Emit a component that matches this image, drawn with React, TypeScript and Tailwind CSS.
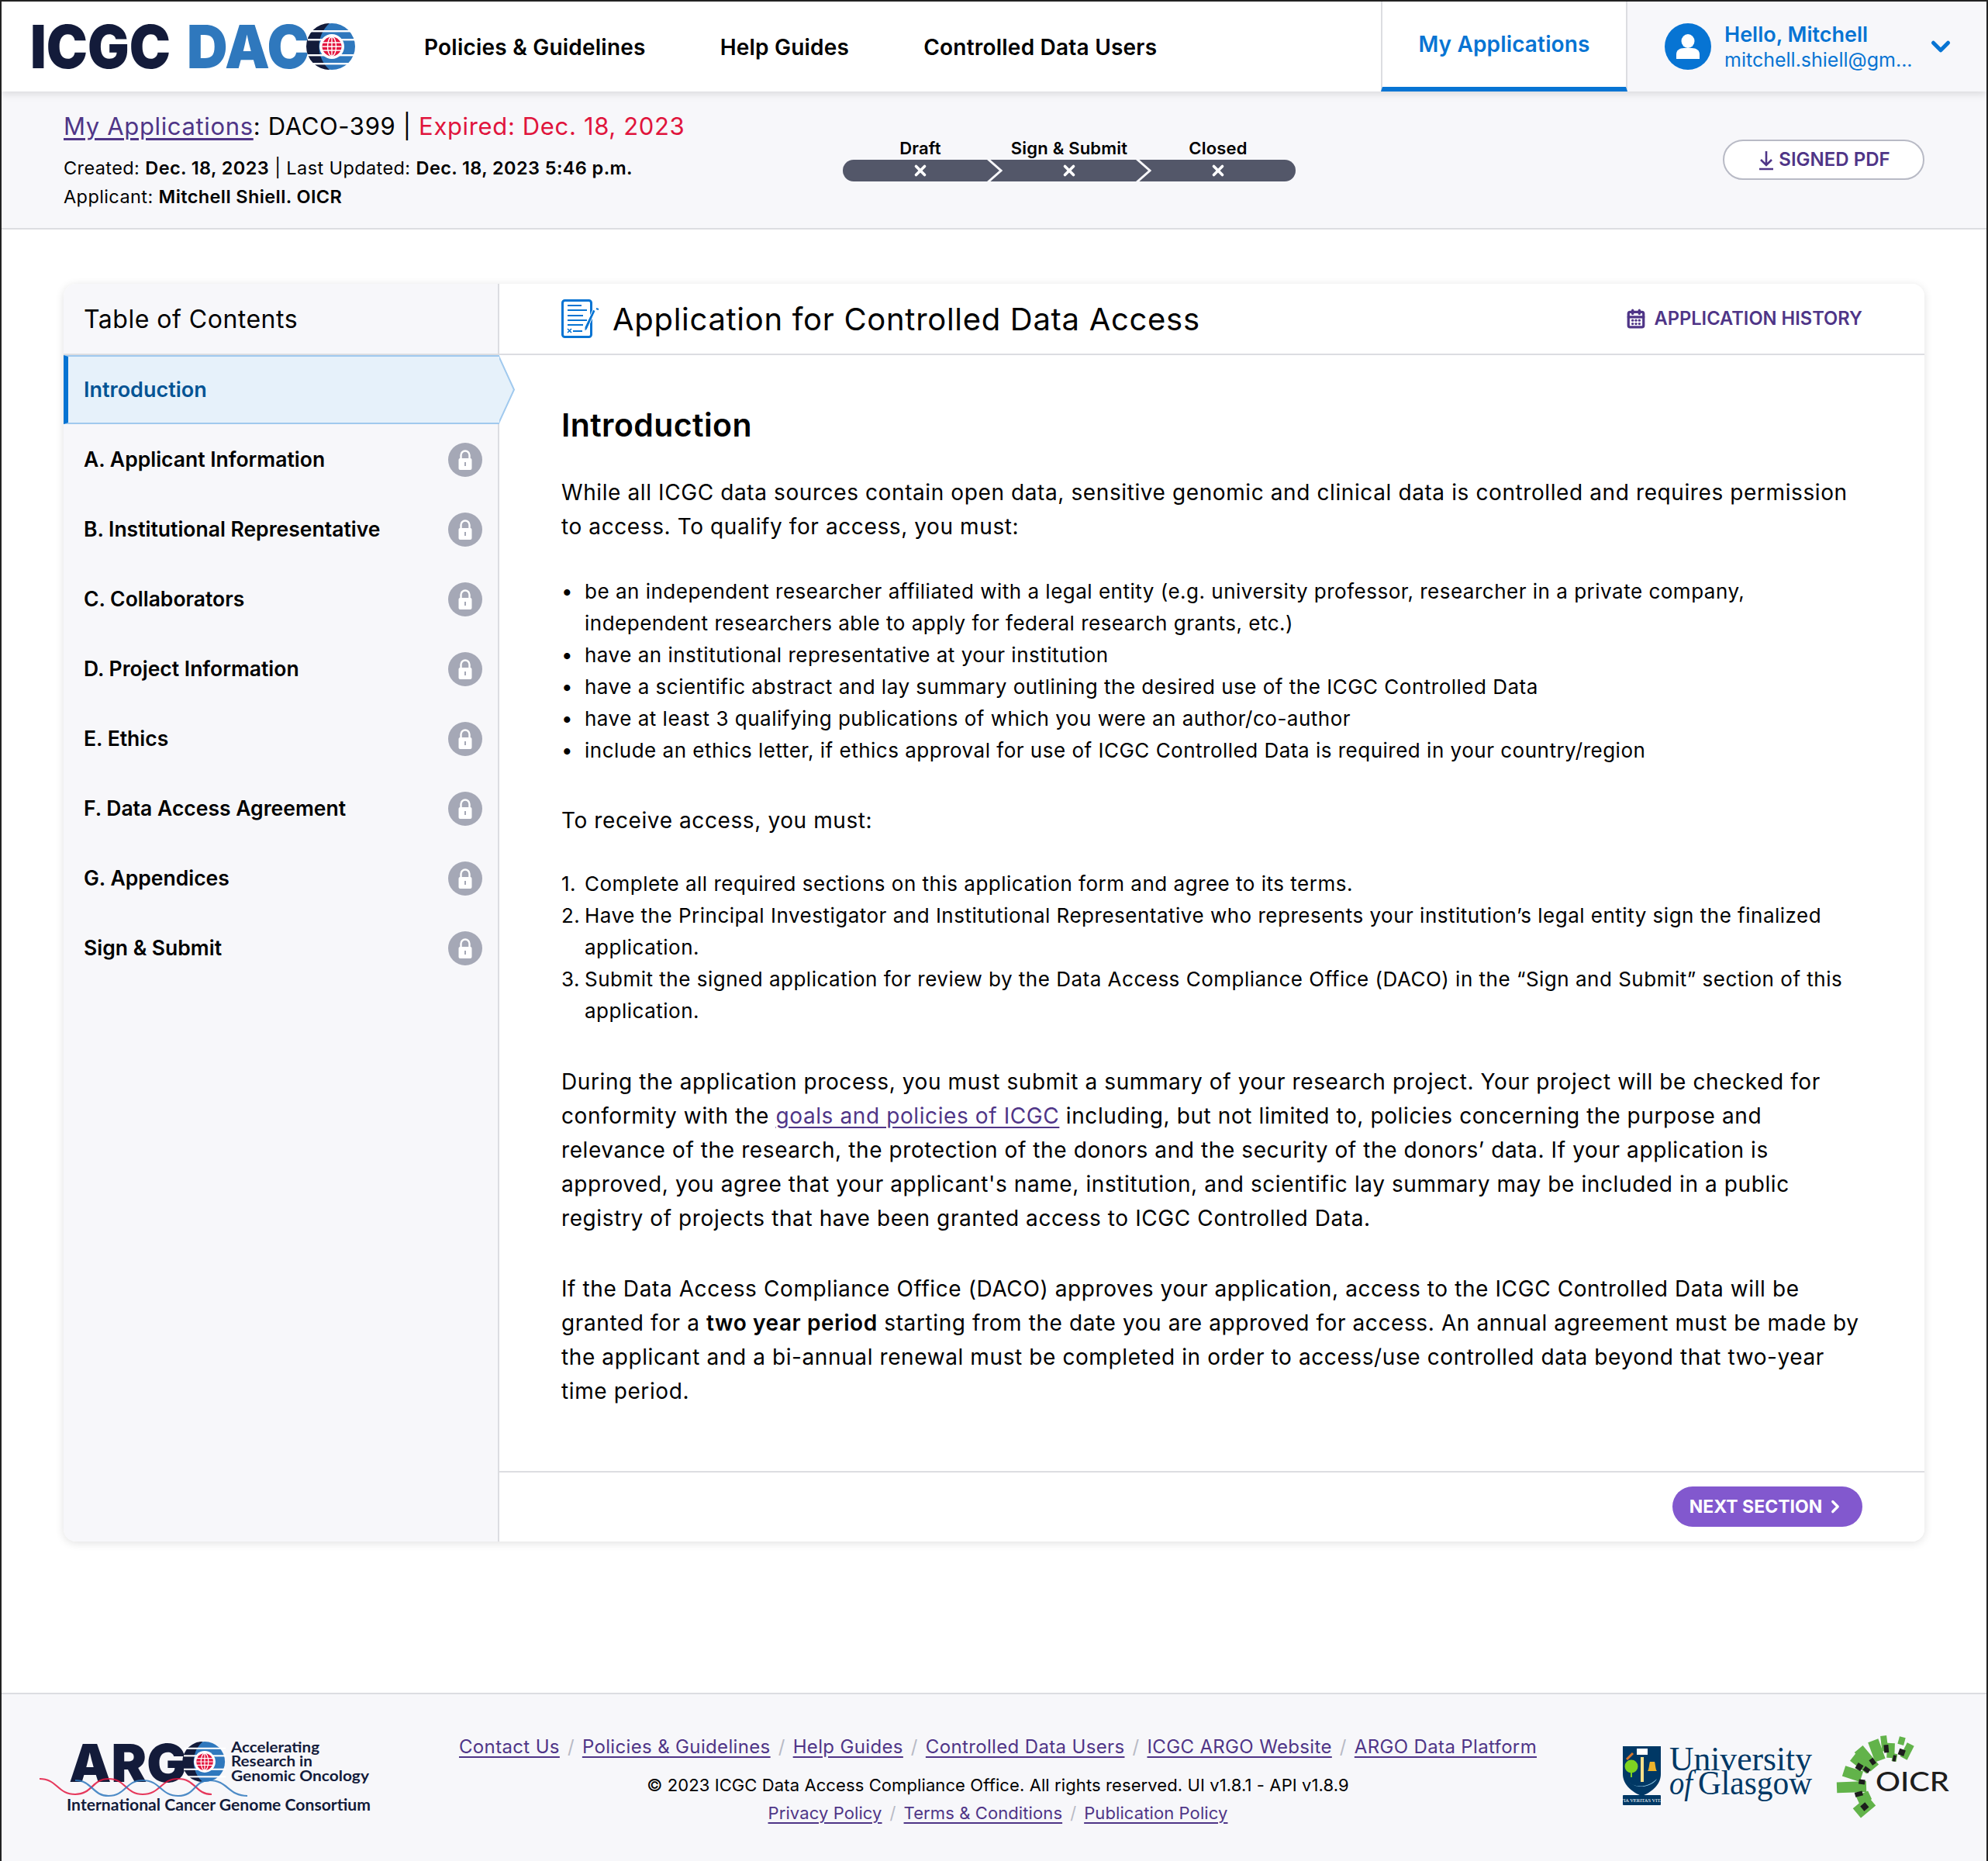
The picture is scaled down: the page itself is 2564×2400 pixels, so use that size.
import React from "react";
import { CalendarDays, ChevronDown, ChevronRight, X } from "lucide-react";

const navLinks = ["Policies & Guidelines", "Help Guides", "Controlled Data Users"];

const sections = [
  "A. Applicant Information",
  "B. Institutional Representative",
  "C. Collaborators",
  "D. Project Information",
  "E. Ethics",
  "F. Data Access Agreement",
  "G. Appendices",
  "Sign & Submit",
];

const steps = ["Draft", "Sign & Submit", "Closed"];

const footerLinks = [
  "Contact Us",
  "Policies & Guidelines",
  "Help Guides",
  "Controlled Data Users",
  "ICGC ARGO Website",
  "ARGO Data Platform",
];

const legalLinks = ["Privacy Policy", "Terms & Conditions", "Publication Policy"];

// [angle, inner radius, outer radius, half width]
const oicrGreen = [
  [-7, 45, 65, 4],
  [-20, 35, 62, 7],
  [2, 36, 55, 5],
  [15, 55, 65, 4],
  [27, 40, 60, 5],
  [10, 32, 42, 3],
  [-40, 30, 62, 7],
  [-52, 33, 60, 6],
  [-72, 38, 62, 7],
  [-92, 30, 68, 7],
  [-115, 28, 45, 6],
  [-130, 30, 55, 8],
];

const oicrBlack = [
  [-5, 43, 53, 3],
  [20, 42, 50, 4],
  [10, 32, 40, 2],
  [-58, 42, 50, 4],
  [-55, 32, 40, 3],
  [-35, 34, 42, 3],
  [-82, 32, 40, 3],
  [-105, 36, 46, 3],
  [-130, 38, 46, 4],
];

// shared ICGC globe mark, drawn around 0,0 with radius 30
function Globe({ dark = "#131b3a", stripe = "#2f78bd" }: { dark?: string; stripe?: string }) {
  return (
    <g>
      <circle r="30" fill={stripe} />
      <path d="M-3 -30 A30 30 0 0 0 -3 30 A40 40 0 0 1 -3 -30Z" fill={dark} />
      {[-21, -10, 10, 21].map((y) => (
        <rect key={y} x="-31" y={y} width="62" height="2.4" fill="#fff" />
      ))}
      <circle r="16" fill="#fff" />
      <circle r="12.5" fill="#e3163f" />
      <g stroke="#fff" strokeWidth="1.4" fill="none">
        <ellipse rx="5.5" ry="12.5" />
        <path d="M0 -12.5V12.5M-12 -5H12M-12.5 0H12.5M-12 5H12" />
      </g>
    </g>
  );
}

function IcgcLogo() {
  return (
    <svg width="418" height="62" viewBox="0 0 418 62" className="shrink-0 overflow-visible">
      <text
        x="-2"
        y="59"
        textLength="181"
        lengthAdjust="spacingAndGlyphs"
        fontFamily="Inter"
        fontWeight="900"
        fontSize="77"
        fill="#131b3a"
      >
        ICGC
      </text>
      <text
        x="200"
        y="59"
        textLength="158"
        lengthAdjust="spacingAndGlyphs"
        fontFamily="Inter"
        fontWeight="900"
        fontSize="77"
        fill="#2f78bd"
      >
        DAC
      </text>
      <g transform="translate(387 31)">
        <Globe />
      </g>
    </svg>
  );
}

function ArgoLogo() {
  return (
    <svg width="436" height="104" viewBox="0 0 436 104" className="shrink-0 overflow-visible">
      <text
        x="41"
        y="57"
        textLength="152"
        lengthAdjust="spacingAndGlyphs"
        fontFamily="Inter"
        fontWeight="900"
        fontSize="68"
        fill="#131b3a"
      >
        ARG
      </text>
      <g transform="translate(216 31) scale(0.87)">
        <Globe />
      </g>
      <g fontFamily="Lato" fontWeight="700" fontSize="19.5" fill="#131b3a">
        <text x="250" y="19" textLength="114" lengthAdjust="spacingAndGlyphs">Accelerating</text>
        <text x="250" y="37" textLength="105" lengthAdjust="spacingAndGlyphs">Research in</text>
        <text x="250" y="56" textLength="178" lengthAdjust="spacingAndGlyphs">Genomic Oncology</text>
        <text x="38" y="94" fontSize="21" textLength="392" lengthAdjust="spacingAndGlyphs">
          International Cancer Genome Consortium
        </text>
      </g>
      <path
        d="M3 53C26 53 26 73 49 73C71 73 71 53 92 53C114 53 114 73 136 73C159 73 159 53 182 53C204 53 204 73 225 73"
        fill="none"
        stroke="#e3163f"
        strokeWidth="2.2"
        opacity="0.85"
      />
      <path
        d="M49 55C71 55 71 75 92 75C114 75 114 55 136 55C159 55 159 75 182 75C204 75 202 55 222 55C246 55 246 75 271 75"
        fill="none"
        stroke="#2f78bd"
        strokeWidth="2.2"
        opacity="0.85"
      />
    </svg>
  );
}

function GlasgowLogo() {
  return (
    <svg width="244" height="76" viewBox="0 0 244 76" className="shrink-0 overflow-visible">
      <path d="M0 0H49V36C49 50 36 60 24.5 64C13 60 0 50 0 36Z" fill="#003865" />
      <rect x="0" y="63" width="49" height="13" rx="1" fill="#003865" />
      <text x="24.5" y="72" textAnchor="middle" fontFamily="Liberation Serif" fontSize="6.5" fill="#fff">
        VIA VERITAS VITA
      </text>
      <rect x="18" y="3" width="14" height="8" fill="#fff" />
      <circle cx="11" cy="26" r="8.5" fill="#7ed321" />
      <rect x="10" y="32" width="2" height="8" fill="#7ed321" />
      <rect x="23" y="14" width="4" height="32" fill="#f8e08a" />
      <path d="M32 32C34 30 34 22 35 20H41C42 22 42 30 44 32Z" fill="#eeb32b" />
      <path d="M8 46C16 54 32 54 44 42C40 50 20 58 8 46Z" fill="#9fd8f5" />
      <path d="M5 17L13 9" stroke="#d9772b" strokeWidth="3" />
      <text x="60" y="31" fontFamily="Liberation Serif" fontSize="44" fill="#003865" textLength="184" lengthAdjust="spacingAndGlyphs">
        University
      </text>
      <text x="60" y="62" fontFamily="Liberation Serif" fontStyle="italic" fontSize="44" fill="#003865" textLength="30" lengthAdjust="spacingAndGlyphs">
        of
      </text>
      <text x="97" y="62" fontFamily="Liberation Serif" fontSize="44" fill="#003865" textLength="147" lengthAdjust="spacingAndGlyphs">
        Glasgow
      </text>
    </svg>
  );
}

function OicrLogo() {
  return (
    <svg width="150" height="106" viewBox="0 0 150 106" className="shrink-0 overflow-visible">
      <g transform="translate(71 67)">
        {oicrGreen.map(([a, r0, r1, w]) => (
          <rect key={a} x={-w} y={-r1} width={w * 2} height={r1 - r0} fill="#62b34a" transform={`rotate(${a})`} />
        ))}
        {oicrBlack.map(([a, r0, r1, w]) => (
          <rect key={a} x={-w} y={-r1} width={w * 2} height={r1 - r0} fill="#1d1d1d" transform={`rotate(${a})`} />
        ))}
      </g>
      <text x="53" y="74" fontFamily="Lato" fontWeight="500" fontSize="35" fill="#1d1d1d" textLength="95" lengthAdjust="spacingAndGlyphs">
        OICR
      </text>
    </svg>
  );
}

function LockBadge() {
  return (
    <span className="flex h-[44px] w-[44px] shrink-0 items-center justify-center rounded-full bg-[#a5a8b6]">
      <svg width="20" height="28" viewBox="0 0 20 28">
        <path d="M4.5 13V8a5.5 5.5 0 0 1 11 0v5" fill="none" stroke="#fff" strokeWidth="2.4" />
        <rect x="1.5" y="12" width="17" height="15" rx="2" fill="#fff" />
        <rect x="9" y="17" width="2" height="5" fill="#a5a8b6" />
      </svg>
    </span>
  );
}

function FormIcon() {
  return (
    <svg width="50" height="50" viewBox="0 0 50 50" className="shrink-0">
      <rect x="1.5" y="1.5" width="37" height="47" rx="3" fill="#fff" stroke="#0774d3" strokeWidth="3" />
      <path d="M8 8H26M8 14H33M8 21H28M8 27H33M8 33H28M15 41H27" stroke="#0774d3" strokeWidth="2" />
      <path d="M8 38L13 43M13 38L8 43" stroke="#0774d3" strokeWidth="1.6" />
      <path d="M44 15L33 39L30 41L30 36L41 13Z" fill="#0774d3" stroke="#fff" strokeWidth="1" />
      <path d="M45 12L48 13" stroke="#0774d3" strokeWidth="2" />
    </svg>
  );
}

function Slash() {
  return <span className="mx-[10px] text-[#b8bac5]">/</span>;
}

function A({ children }: { children: React.ReactNode }) {
  return <a className="text-[#4f3587] underline underline-offset-[4px]">{children}</a>;
}

export default function App() {
  return (
    <div className="flex h-[2400px] flex-col overflow-hidden border-x-2 border-t-2 border-[#222222] bg-white font-['Inter',sans-serif] text-black">
      {/* top nav */}
      <header className="relative z-10 flex h-[116px] shrink-0 items-stretch bg-white shadow-[0_3px_10px_rgba(0,0,0,0.12)]">
        <div className="flex items-center pl-[39px]">
          <IcgcLogo />
        </div>
        <nav className="ml-[88px] flex flex-1 items-center gap-[96px] pt-[2px] text-[28px] font-semibold tracking-[0.22px]">
          {navLinks.map((l) => (
            <a key={l}>{l}</a>
          ))}
        </nav>
        <div className="flex w-[318px] items-center justify-center border-x-2 border-b-[6px] border-x-[#dcdde1] border-b-[#0774d3] text-[28px] font-semibold tracking-[0.15px] text-[#0774d3]">
          My Applications
        </div>
        <div className="flex w-[463px] items-center bg-[#f7f7fa] pl-[48px] text-[#0774d3]">
          <span className="flex h-[60px] w-[60px] items-center justify-center rounded-full bg-[#0774d3]">
            <svg width="30" height="32" viewBox="0 0 30 32">
              <ellipse cx="15" cy="9" rx="8.5" ry="9" fill="#fff" />
              <path d="M0 32V26C0 21 4 18 10 18H20C26 18 30 21 30 26V32Z" fill="#fff" />
            </svg>
          </span>
          <div className="ml-[17px] w-[250px]">
            <div className="text-[27px] font-semibold leading-[34px]">Hello, Mitchell</div>
            <div className="text-[25px] leading-[30px]">mitchell.shiell@gm...</div>
          </div>
          <ChevronDown className="ml-[10px]" size={38} strokeWidth={3.2} />
        </div>
      </header>

      {/* application summary */}
      <section className="flex h-[178px] shrink-0 items-start border-b-2 border-[#dcdde1] bg-[#f7f7fa] px-[80px]">
        <div className="w-[1005px] pt-[25px]">
          <div className="text-[31px] leading-[40px] tracking-[0.65px]">
            <A>My Applications</A>: DACO-399 | <span className="text-[#e0143c]">Expired: Dec. 18, 2023</span>
          </div>
          <div className="mt-[15px] text-[23.5px] leading-[37px] tracking-[0.4px]">
            <div>
              Created: <b className="font-semibold">Dec. 18, 2023</b> | Last Updated:{" "}
              <b className="font-semibold">Dec. 18, 2023 5:46 p.m.</b>
            </div>
            <div>
              Applicant: <b className="font-semibold">Mitchell Shiell. OICR</b>
            </div>
          </div>
        </div>
        <div className="w-[584px] pt-[58px]">
          <div className="flex px-[4px] text-[22px] font-semibold leading-[30px] tracking-[0.2px]">
            {steps.map((s) => (
              <span key={s} className="flex-1 text-center">
                {s}
              </span>
            ))}
          </div>
          <div className="relative flex h-[28px] rounded-full bg-[#535769] px-[4px]">
            {steps.map((s, i) => (
              <span key={s} className="relative flex flex-1 items-center justify-center text-white">
                <X size={22} strokeWidth={4} />
                {i < 2 && (
                  <svg width="20" height="28" viewBox="0 0 20 28" className="absolute right-[-10px] top-0">
                    <path d="M1 -1L18 14L1 29" fill="#535769" stroke="#f7f7fa" strokeWidth="3" />
                  </svg>
                )}
              </span>
            ))}
          </div>
        </div>
        <div className="ml-auto pt-[62px]">
          <button className="flex h-[52px] w-[260px] items-center justify-center gap-[4px] rounded-full border-2 border-[#b8bac5] bg-white text-[24px] font-semibold text-[#4f3587]">
            <svg width="24" height="28" viewBox="0 0 24 28" fill="none" stroke="#4f3587" strokeWidth="2.6">
              <path d="M12 3V20M5 14L12 21L19 14M3 26H21" />
            </svg>
            SIGNED PDF
          </button>
        </div>
      </section>

      {/* application card */}
      <main className="flex-1 px-[80px] pt-[70px]">
        <div className="flex h-[1622px] overflow-hidden rounded-[16px] shadow-[0_2px_12px_rgba(0,0,0,0.12)]">
          <aside className="relative z-10 w-[562px] shrink-0 border-r-2 border-[#dcdde1] bg-[#f7f7fa]">
            <div className="flex h-[92px] items-center border-b-2 border-[#dcdde1] pl-[26px] pt-[2px] text-[32px] tracking-[0.5px]">
              Table of Contents
            </div>
            <div className="relative -mr-[2px] flex h-[89px] items-center border-y-2 border-l-[6px] border-y-[#a0c9ee] border-l-[#0774d3] bg-[#e6f1fa] pl-[20px] pt-[2px] text-[27px] font-semibold text-[#045494]">
              Introduction
              <svg width="22" height="89" viewBox="0 0 22 89" className="absolute left-full top-[-2px]">
                <path d="M-1 1L19 44.5L-1 88" fill="#e6f1fa" stroke="#a0c9ee" strokeWidth="2" />
              </svg>
            </div>
            {sections.map((s) => (
              <div key={s} className="flex h-[90px] items-center justify-between pl-[26px] pr-[20px] pt-[2px] text-[26.5px] font-semibold">
                {s}
                <LockBadge />
              </div>
            ))}
          </aside>
          <div className="flex min-w-0 flex-1 flex-col bg-white">
            <div className="flex h-[92px] shrink-0 items-center border-b-2 border-[#dcdde1] pl-[80px] pr-[80px]">
              <FormIcon />
              <h1 className="ml-[16px] flex-1 pt-[2px] text-[40px] tracking-[0.7px]">Application for Controlled Data Access</h1>
              <a className="flex items-center gap-[10px] text-[23.7px] font-semibold text-[#4f3587]">
                <CalendarDays size={26} strokeWidth={3} />
                APPLICATION HISTORY
              </a>
            </div>
            <div className="flex-1 pl-[80px] pr-[40px] pt-[64px] text-[28px] leading-[44px] tracking-[0.6px]">
              <h2 className="text-[41px] font-semibold leading-[52px] tracking-[0.4px]">Introduction</h2>
              <p className="mt-[39px]">
                While all ICGC data sources contain open data, sensitive genomic and clinical data is controlled and
                requires permission
                <br />
                to access. To qualify for access, you must:
              </p>
              <ul className="mt-[41px] text-[26px] leading-[41px] tracking-[0.5px]">
                {[
                  <>
                    be an independent researcher affiliated with a legal entity (e.g. university professor, researcher
                    in a private company,
                    <br />
                    independent researchers able to apply for federal research grants, etc.)
                  </>,
                  "have an institutional representative at your institution",
                  "have a scientific abstract and lay summary outlining the desired use of the ICGC Controlled Data",
                  "have at least 3 qualifying publications of which you were an author/co-author",
                  "include an ethics letter, if ethics approval for use of ICGC Controlled Data is required in your country/region",
                ].map((t, i) => (
                  <li key={i} className="flex">
                    <span className="w-[30px] shrink-0">•</span>
                    <span>{t}</span>
                  </li>
                ))}
              </ul>
              <p className="mt-[48px]">To receive access, you must:</p>
              <ol className="mt-[39px] text-[26px] leading-[41px] tracking-[0.5px]">
                {[
                  "Complete all required sections on this application form and agree to its terms.",
                  <>
                    Have the Principal Investigator and Institutional Representative who represents your institution’s
                    legal entity sign the finalized
                    <br />
                    application.
                  </>,
                  <>
                    Submit the signed application for review by the Data Access Compliance Office (DACO) in the “Sign
                    and Submit” section of this
                    <br />
                    application.
                  </>,
                ].map((t, i) => (
                  <li key={i} className="flex">
                    <span className="w-[30px] shrink-0">{i + 1}.</span>
                    <span>{t}</span>
                  </li>
                ))}
              </ol>
              <p className="mt-[49px]">
                During the application process, you must submit a summary of your research project. Your project will be
                checked for
                <br />
                conformity with the <A>goals and policies of ICGC</A> including, but not limited to, policies concerning
                the purpose and
                <br />
                relevance of the research, the protection of the donors and the security of the donors’ data. If your
                application is
                <br />
                approved, you agree that your applicant's name, institution, and scientific lay summary may be included
                in a public
                <br />
                registry of projects that have been granted access to ICGC Controlled Data.
              </p>
              <p className="mt-[47px]">
                If the Data Access Compliance Office (DACO) approves your application, access to the ICGC Controlled Data
                will be
                <br />
                granted for a <b className="font-semibold">two year period</b> starting from the date you are approved
                for access. An annual agreement must be made by
                <br />
                the applicant and a bi-annual renewal must be completed in order to access/use controlled data beyond
                that two-year
                <br />
                time period.
              </p>
            </div>
            <div className="flex h-[91px] shrink-0 items-start justify-end border-t-2 border-[#dcdde1] pr-[80px] pt-[18px]">
              <button className="flex h-[52px] w-[245px] items-center justify-center gap-[4px] rounded-full bg-[#8258ce] text-[23px] font-bold text-white">
                NEXT SECTION
                <ChevronRight size={26} strokeWidth={3} />
              </button>
            </div>
          </div>
        </div>
      </main>

      {/* footer */}
      <footer className="flex h-[217px] shrink-0 items-start border-t-2 border-[#dcdde1] bg-[#f7f7fa]">
        <div className="w-[540px] shrink-0 pl-[46px] pt-[56px]">
          <ArgoLogo />
        </div>
        <div className="min-w-0 flex-1 whitespace-nowrap pt-[50px] text-center text-[24px] leading-[36px] tracking-[0.35px]">
          <div>
            {footerLinks.map((l, i) => (
              <React.Fragment key={l}>
                {i > 0 && <Slash />}
                <A>{l}</A>
              </React.Fragment>
            ))}
          </div>
          <div className="mt-[13px] text-[22px] tracking-[0.1px]">
            © 2023 ICGC Data Access Compliance Office. All rights reserved. UI v1.8.1 - API v1.8.9
          </div>
          <div className="text-[22px] tracking-[0.1px]">
            {legalLinks.map((l, i) => (
              <React.Fragment key={l}>
                {i > 0 && <Slash />}
                <A>{l}</A>
              </React.Fragment>
            ))}
          </div>
        </div>
        <div className="flex w-[530px] shrink-0 items-start justify-end pr-[46px] pt-[67px]">
          <GlasgowLogo />
          <span className="-mt-[16px] ml-[29px]">
            <OicrLogo />
          </span>
        </div>
      </footer>
    </div>
  );
}
